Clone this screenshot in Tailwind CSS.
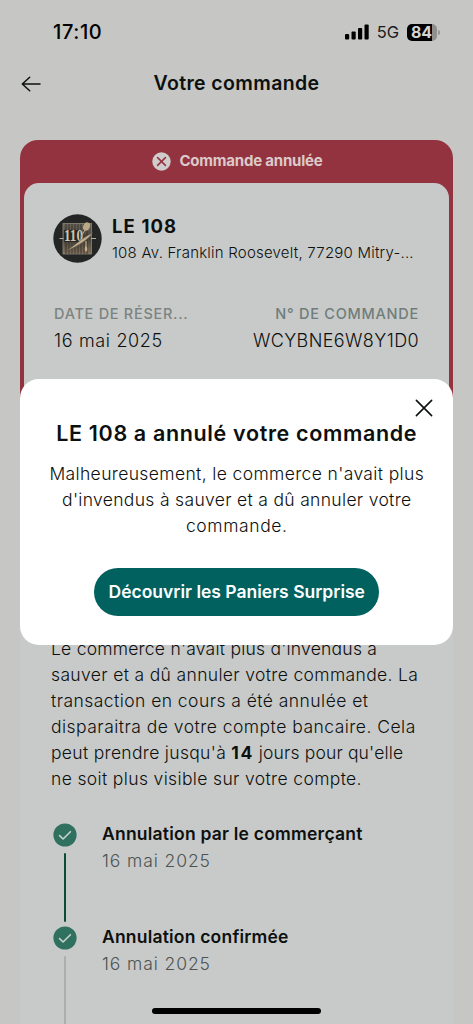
<!DOCTYPE html>
<html lang="fr">
<head>
<meta charset="utf-8">
<meta name="viewport" content="width=device-width, initial-scale=1">
<title>Votre commande</title>
<script src="https://cdn.jsdelivr.net/npm/@tailwindcss/browser@4"></script>
</head>
<body class="bg-[#c6c6c4]">
<div class="relative h-[1024px] w-[473px] overflow-hidden bg-[#c6c6c4] font-['Inter',sans-serif] whitespace-nowrap text-[#0c100f]">

  <!-- Status bar -->
  <div class="flex h-16 items-center justify-between pr-[33px] pl-[53px] text-black">
    <span class="text-[20px] font-medium tracking-[0.6px]">17:10</span>
    <div class="flex items-center">
      <svg class="mr-[8px]" width="24" height="16" viewBox="0 0 24 16" fill="currentColor">
        <rect x="0" y="10" width="4.2" height="5.5" rx="1"/>
        <rect x="6.5" y="7.5" width="4.2" height="8" rx="1"/>
        <rect x="13" y="4" width="4.2" height="11.5" rx="1"/>
        <rect x="19.5" y="0.5" width="4.2" height="15" rx="1"/>
      </svg>
      <span class="mr-[8px] text-[16.5px] font-normal text-[#1c1c1c]">5G</span>
      <div class="flex h-[17px] w-[30px] items-center justify-center rounded-[5px] bg-linear-to-r from-black from-84% to-[#8f8f8e] to-84% pr-[1px] text-[16px] font-bold text-[#d4d4d2]">84</div>
      <div class="ml-[1px] h-[5px] w-[2px] rounded-r-full bg-[#969695]"></div>
    </div>
  </div>

  <!-- Header -->
  <div class="grid h-[38px] grid-cols-[1fr_auto_1fr] items-center px-5">
    <svg class="translate-y-px" width="22" height="18" viewBox="0 0 22 18" fill="none" stroke="currentColor" stroke-width="1.5" stroke-linecap="round" stroke-linejoin="round"><path d="M20 9H2.3M9.7 2.2L2.3 9l7.4 6.8"/></svg>
    <h1 class="pt-[2px] text-[19.5px] font-semibold tracking-[0.38px]">Votre commande</h1>
  </div>

  <!-- Order card -->
  <main class="mx-5 mt-[38px] h-[900px] w-[433px] rounded-t-[18px] bg-[#c8cac9]">
    <section class="h-[430px] rounded-[18px] bg-[#943340] px-1">
      <div class="flex h-[43px] items-center justify-center pl-[2px] text-[15px] font-bold text-[#dcc9c9]">
        <svg class="mr-[8px]" width="19" height="19" viewBox="0 0 19 19"><circle cx="9.5" cy="9.5" r="9.2" fill="#d0cccb"/><path d="M5.6 5.6l7.8 7.8M13.4 5.6l-7.8 7.8" stroke="#943340" stroke-width="1.5" stroke-linecap="round"/></svg>
        <span class="tracking-[-0.2px]">Commande annulée</span>
      </div>
      <div class="h-[380px] rounded-[15px] bg-[#c8cac9] px-[29px] pt-[31px]">
        <div class="flex h-12 items-center">
          <svg class="shrink-0" width="49" height="49" viewBox="0 0 49 49">
            <defs><linearGradient id="wood" x1="0" y1="0" x2="0" y2="1"><stop offset="0" stop-color="#6b665b"/><stop offset=".5" stop-color="#45413a"/><stop offset="1" stop-color="#82705a"/></linearGradient></defs>
            <circle cx="24.5" cy="24.5" r="24.2" fill="#242625"/>
            <rect x="10" y="9.5" width="28.5" height="30.5" fill="url(#wood)" stroke="#8d8675" stroke-width=".8"/>
            <path d="M13 10v30M16 10v30M19 10v30M22 10v30M25 10v30M28 10v30M31 10v30M34 10v30" stroke="#302d28" stroke-width=".8"/>
            <path d="M6.5 24.500h4M38 24.500h5" stroke="#b2aea0" stroke-width="1.2"/>
            <rect x="11" y="16" width="18" height="12" fill="#292824"/>
            <text x="20.5" y="27.3" text-anchor="middle" font-family="Liberation Serif, serif" font-size="16" font-weight="700" fill="#d1c7ac" textLength="19" lengthAdjust="spacingAndGlyphs">110</text>
            <path d="M32 16l-4 7" stroke="#aaa088" stroke-width="1.1"/>
            <ellipse cx="33.5" cy="12.5" rx="3.3" ry="4.3" transform="rotate(22 33.5 12.5)" fill="#b9a986"/>
            <path d="M12.500 37.500Q23 30 29 25L39.500 18.500Q38 22.500 31 27.500T12.500 37.500Z" fill="#bfae91" stroke="#4d4537" stroke-width=".5"/>
            <path d="M33 27v7" stroke="#c4b596" stroke-width="1.1"/>
            <ellipse cx="33" cy="35" rx="1.3" ry="2.8" fill="#bdad90"/>
          </svg>
          <div class="ml-[10px] flex flex-col pt-[2px]">
            <span class="h-[26px] text-[18.5px] leading-[27px] font-bold tracking-[1.1px]">LE 108</span>
            <span class="h-[26px] text-[15px] leading-[28px] font-light tracking-[0.22px]">108 Av. Franklin Roosevelt, 77290 Mitry-...</span>
          </div>
        </div>
        <div class="mt-[38px] flex justify-between pr-[1px]">
          <div class="flex flex-col pl-px">
            <span class="text-[14.5px] leading-[27px] font-medium tracking-[0.72px] text-[#7b8482]">DATE DE RÉSER...</span>
            <span class="text-[18px] leading-[27px] font-light tracking-[0.65px]">16 mai 2025</span>
          </div>
          <div class="flex flex-col items-end">
            <span class="text-[14.5px] leading-[27px] font-medium tracking-[0.75px] text-[#6f7d7b]">N° DE COMMANDE</span>
            <span class="text-[18px] leading-[27px] font-light tracking-[0.4px]">WCYBNE6W8Y1D0</span>
          </div>
        </div>
      </div>
    </section>

    <p class="mt-[66px] pl-[31px] text-[17.5px] leading-[26px] font-light">
      <span class="block tracking-[0.23px]">Le commerce n'avait plus d'invendus à</span>
      <span class="block tracking-[0.35px]">sauver et a dû annuler votre commande. La</span>
      <span class="block tracking-[0.45px]">transaction en cours a été annulée et</span>
      <span class="block tracking-[0.48px]">disparaitra de votre compte bancaire. Cela</span>
      <span class="block"><span class="tracking-[0.32px]">peut prendre jusqu'à </span><b class="font-bold tracking-[1.5px]">14</b><span class="tracking-[0.15px]"> jours pour qu'elle</span></span>
      <span class="block tracking-[0.36px]">ne soit plus visible sur votre compte.</span>
    </p>

    <!-- Timeline -->
    <ol class="mt-[28px] pl-[33px]">
      <li class="flex h-[103px]">
        <div class="flex w-6 flex-col items-center pt-[3px]">
          <svg class="shrink-0" width="24" height="24" viewBox="0 0 24 24"><circle cx="12" cy="12" r="11.6" fill="#30705f"/><path d="M6.6 12.6l3.500 3.400 7.300-7.300" fill="none" stroke="#c8d3ce" stroke-width="1.6" stroke-linecap="round" stroke-linejoin="round"/></svg>
          <div class="mt-[5.5px] h-[69px] w-[2px] shrink-0 rounded-full bg-[#0d4c37]"></div>
        </div>
        <div class="ml-[25px] flex flex-col pt-px leading-[26.5px]">
          <span class="text-[17.5px] font-semibold tracking-[0.22px]">Annulation par le commerçant</span>
          <span class="text-[17.5px] font-light tracking-[0.9px] text-[#4c5351]">16 mai 2025</span>
        </div>
      </li>
      <li class="flex h-[103px]">
        <div class="flex w-6 flex-col items-center pt-[3px]">
          <svg class="shrink-0" width="24" height="24" viewBox="0 0 24 24"><circle cx="12" cy="12" r="11.6" fill="#30705f"/><path d="M6.6 12.6l3.500 3.400 7.300-7.300" fill="none" stroke="#c8d3ce" stroke-width="1.6" stroke-linecap="round" stroke-linejoin="round"/></svg>
          <div class="mt-[5.5px] h-[80px] w-[2px] shrink-0 rounded-full bg-[#acaead]"></div>
        </div>
        <div class="ml-[25px] flex flex-col pt-px leading-[26.5px]">
          <span class="text-[17.5px] font-semibold tracking-[0.2px]">Annulation confirmée</span>
          <span class="text-[17.5px] font-light tracking-[0.9px] text-[#4c5351]">16 mai 2025</span>
        </div>
      </li>
    </ol>
  </main>

  <!-- Modal -->
  <div role="dialog" class="absolute top-[379px] left-[19.5px] flex h-[265.5px] w-[433.5px] flex-col items-center rounded-[19px] bg-white">
    <button class="absolute top-[20px] right-[20.5px]" aria-label="Fermer">
      <svg width="18" height="18" viewBox="0 0 18 18" stroke="#0c100f" stroke-width="1.6" stroke-linecap="round"><path d="M1.4 1.400l15.200 15.200M16.600 1.400L1.400 16.600"/></svg>
    </button>
    <h2 class="mt-[40px] pl-px text-[21.5px] leading-[28px] font-semibold tracking-[0.65px]">LE 108 a annulé votre commande</h2>
    <p class="mt-[14px] pl-px text-center text-[17.5px] leading-[26px] font-light">
      <span class="block tracking-[0.37px]">Malheureusement, le commerce n'avait plus</span>
      <span class="block tracking-[0.32px]">d'invendus à sauver et a dû annuler votre</span>
      <span class="block tracking-[0.6px]">commande.</span>
    </p>
    <button class="mt-[29px] flex h-[47.5px] w-[285.5px] items-center justify-center rounded-full bg-[#00615f] pl-px text-[17.5px] font-semibold text-white">Découvrir les Paniers Surprise</button>
  </div>

  <!-- Home indicator -->
  <div class="absolute bottom-[10px] left-[152px] h-[6px] w-[169px] rounded-full bg-black"></div>
</div>
</body>
</html>
